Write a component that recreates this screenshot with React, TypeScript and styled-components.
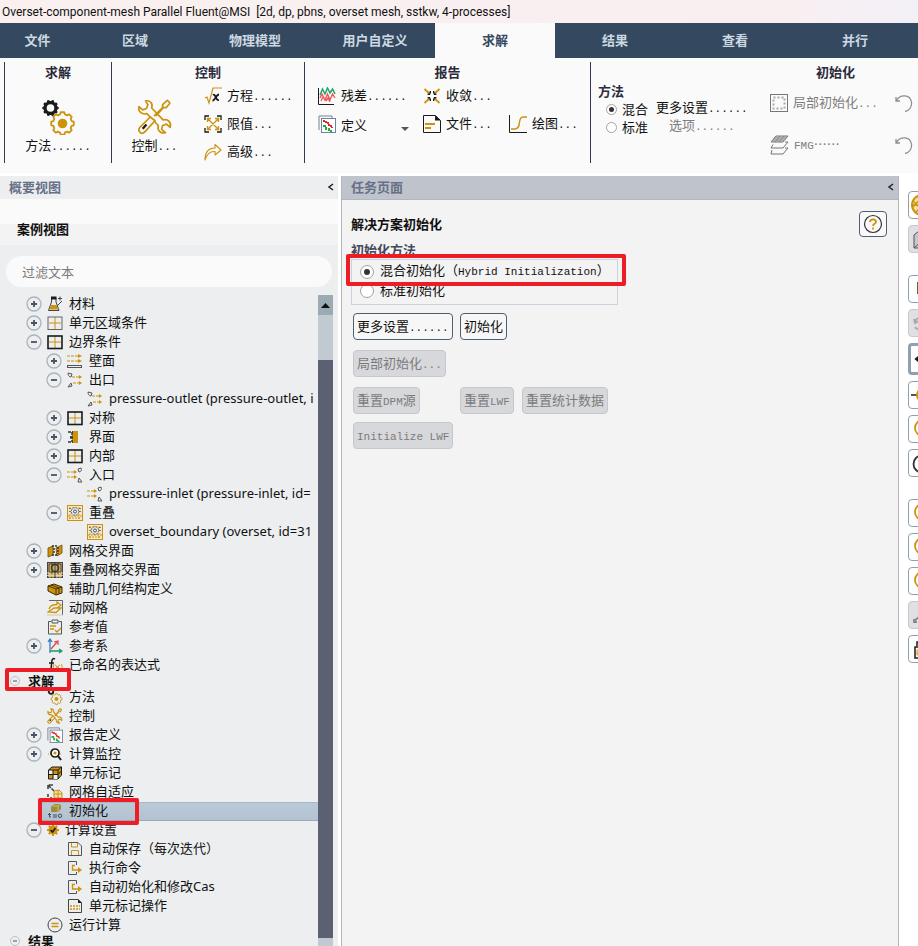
import React from "react";
import styled, { createGlobalStyle, css } from "styled-components";

const gold = "#cc930f";
const ink = "#1b1b1b";
const cjk = '"Noto Sans CJK SC", sans-serif';
const ui = '"Noto Sans", "Noto Sans CJK SC", sans-serif';

const GlobalStyle = createGlobalStyle`
  *, *::before, *::after { box-sizing: border-box; }
  body { margin: 0; background: #ffffff; }
  button, input { font: inherit; color: inherit; }
`;

const Shell = styled.div`
  display: flex;
  flex-direction: column;
  height: 100vh;
  overflow: hidden;
  color: #111;
  font: 13px/19px ${cjk};
`;

const TitleBar = styled.header`
  flex: none;
  height: 23px;
  padding: 0 2px;
  background: linear-gradient(90deg, #f9f0ef 0%, #f9eff1 85%, #f2f0f7 100%);
  font: 12px/24px Roboto, sans-serif;
  white-space: pre;
`;

const TabBar = styled.nav`
  display: flex;
  flex: none;
  height: 35px;
  overflow: hidden;
  background: #34495f;
`;

const Tab = styled.button<{ $active?: boolean; $first?: boolean }>`
  flex: none;
  width: ${(p) => (p.$first ? 75 : 120)}px;
  border: 0;
  padding: 0 0 1px;
  background: ${(p) => (p.$active ? "#fafafa" : "transparent")};
  color: ${(p) => (p.$active ? "#34495f" : "#ccd9e2")};
  font: bold 13px/34px ${cjk};
`;

const Ribbon = styled.section`
  display: flex;
  flex: none;
  height: 115px;
  padding: 4px 0 10px 4px;
  overflow: hidden;
  background: #fafafa;
`;

const Group = styled.div<{ $width: number }>`
  display: flex;
  flex: none;
  flex-direction: column;
  width: ${(p) => p.$width}px;
  border-left: 1px solid #2f3b4a;
`;

const GroupTitle = styled.h2`
  margin: 0;
  color: #2b2b3a;
  font: bold 13px/20px ${cjk};
  text-align: center;
`;

const GroupBody = styled.div<{ $pad?: number }>`
  display: flex;
  flex: 1;
  gap: 7px;
  padding-left: ${(p) => p.$pad ?? 0}px;
`;

const BigTool = styled.button<{ $width: number }>`
  display: flex;
  flex-direction: column;
  align-items: center;
  justify-content: flex-end;
  width: ${(p) => p.$width}px;
  height: 75px;
  border: 0;
  padding: 0;
  background: none;
  white-space: nowrap;
`;

const ToolGrid = styled.div<{ $columns: string }>`
  display: grid;
  grid-template-columns: ${(p) => p.$columns};
  grid-auto-rows: 28px;
  align-content: start;
`;

const Tool = styled.button`
  display: flex;
  align-items: center;
  gap: 5px;
  border: 0;
  padding: 0;
  background: none;
  white-space: nowrap;

  &:disabled { color: #7d7d7d; }
`;

const Caret = styled.span`
  margin: 9px 0 0 29px;
  border: 4px solid transparent;
  border-top-color: #555;
  border-bottom: 0;
`;

const Mono = styled.span`
  font: 11px/19px "Liberation Mono", monospace;
`;

const MethodColumn = styled.div`
  width: 172px;
  padding: 0 0 0 7px;
`;

const MethodTitle = styled.div`
  color: #2b2b3a;
  font: bold 13px/18px ${cjk};
`;

const MethodGrid = styled.div`
  display: grid;
  grid-template-columns: 58px auto;
  grid-auto-rows: 18px;
  align-items: center;
  justify-items: start;
`;

const RadioLabel = styled.label`
  display: flex;
  align-items: center;
  gap: 6px;
  white-space: nowrap;
`;

const RadioText = styled.span`
  padding-bottom: 2px;
`;

const Radio = styled.input<{ $size: number }>`
  display: grid;
  place-items: center;
  appearance: none;
  width: ${(p) => p.$size}px;
  height: ${(p) => p.$size}px;
  margin: 0;
  border: 1px solid #a3a3a3;
  border-radius: 50%;
  background: #fff;

  &:checked::after {
    content: "";
    width: ${(p) => (p.$size > 12 ? 6 : 5)}px;
    height: ${(p) => (p.$size > 12 ? 6 : 5)}px;
    border-radius: 50%;
    background: #333;
  }
`;

const MethodRadio = styled(RadioLabel)`
  padding-left: 8px;
  gap: 5px;
`;

const PlainButton = styled.button<{ $indent?: number }>`
  margin-left: ${(p) => p.$indent ?? 0}px;
  border: 0;
  padding: 0 0 2px;
  background: none;
  line-height: 18px;
  white-space: nowrap;

  &:disabled { color: #7d7d7d; }
`;

const InitGrid = styled.div`
  display: grid;
  grid-template-columns: 125px 20px;
  grid-auto-rows: 42px;
  align-items: center;
`;

const Workspace = styled.main`
  display: flex;
  flex: 1;
  min-height: 0;
  gap: 3px;
  padding-top: 3px;
`;

const Outline = styled.aside`
  display: flex;
  flex: none;
  flex-direction: column;
  width: 338px;
  background: #eceeef;
`;

const PanelHeader = styled.div<{ $strong?: boolean }>`
  display: flex;
  flex: none;
  align-items: center;
  justify-content: space-between;
  height: ${(p) => (p.$strong ? 24 : 23)}px;
  padding: 0 3px 2px 9px;
  background: ${(p) => (p.$strong ? "#bfc3cb" : "#eceeef")};
  ${(p) => p.$strong && "border-bottom: 1px solid #b2b6bd;"}
  color: #667087;
  font: bold 13px/20px ${cjk};
`;

const Collapse = styled.button`
  display: flex;
  border: 0;
  padding: 0;
  background: none;
`;

const CaseTitle = styled.h2`
  flex: none;
  height: 46px;
  margin: 0;
  padding: 20px 0 0 17px;
  background: linear-gradient(#fafafa 25px, #f3f3f3 25px);
  font: bold 13px/20px ${cjk};
`;

const Search = styled.input`
  flex: none;
  height: 31px;
  margin: 11px 6px 8px 6px;
  border: 0;
  border-radius: 16px;
  padding: 0 16px;
  background: #fafafa;
  font: 13px/20px ${cjk};

  &::placeholder { color: #7b7b7b; opacity: 1; }
`;

const TreeArea = styled.div`
  display: flex;
  flex: 1;
  min-height: 0;
  padding-right: 5px;
`;

const Tree = styled.ul`
  flex: 1;
  min-width: 0;
  margin: 0;
  padding: 0;
  overflow: hidden;
  list-style: none;
`;

const Row = styled.li<{ $level: number }>`
  position: relative;
  display: flex;
  align-items: center;
  height: 19px;
  padding-left: ${(p) => 6 + p.$level * 20}px;
  white-space: nowrap;
`;

const SectionRow = styled.li`
  position: relative;
  display: flex;
  align-items: center;
  gap: 8px;
  height: 13px;
  padding: 0 0 2px 10px;
  font: bold 13px/13px ${cjk};
`;

const Slot = styled.span`
  display: flex;
  flex: none;
  width: 16px;
  padding-bottom: 2px;
`;

const Toggle = styled.button`
  display: flex;
  border: 0;
  padding: 0;
  background: none;
`;

const RowContent = styled.span<{ $selected?: boolean }>`
  display: flex;
  flex: 1;
  align-items: center;
  gap: 6px;
  height: 19px;
  padding: 0 0 2px 5px;
  font: 13px/19px ${ui};
  ${(p) =>
    p.$selected &&
    css`
      padding-bottom: 1px;
      border-bottom: 1px solid #98a9b8;
      background: linear-gradient(#bccad7, #b3c2d1);
      box-shadow: inset 0 1px #a9b8c6;
    `}
`;

const Mark = styled.span<{ $x: number; $y: number; $w: number; $h: number }>`
  position: absolute;
  z-index: 2;
  left: ${(p) => p.$x}px;
  top: ${(p) => p.$y}px;
  width: ${(p) => p.$w}px;
  height: ${(p) => p.$h}px;
  border: 4px solid #ee1c25;
  border-radius: 2px;
  pointer-events: none;
`;

const ScrollTrack = styled.div`
  display: flex;
  flex: none;
  flex-direction: column;
  width: 15px;
  padding-bottom: 8px;
  background: #c2cad1;
`;

const ScrollUp = styled.button`
  display: flex;
  align-items: center;
  justify-content: center;
  height: 20px;
  margin-bottom: 45px;
  border: 0;
  padding: 0;
  background: #9babb4;
`;

const ScrollThumb = styled.div`
  flex: 1;
  background: #5b6172;
`;

const TaskPage = styled.section`
  flex: 1;
  min-width: 0;
  border: solid #b3b5b9;
  border-width: 0 1px;
  background: #f3f3f3;
`;

const TaskBody = styled.div`
  display: flex;
  align-items: flex-start;
  justify-content: space-between;
  padding: 11px 11px 0 9px;
`;

const TaskTitle = styled.h1`
  margin: 3px 0 7px;
  font: bold 13px/20px ${cjk};
`;

const Methods = styled.div`
  position: relative;
  width: 267px;
`;

const MethodsTitle = styled.div`
  height: 18px;
  color: #44485a;
  font: bold 13px/17px ${cjk};
`;

const MethodsBox = styled.div`
  display: grid;
  grid-auto-rows: 19px;
  height: 46px;
  padding: 2px 0 0 8px;
  border: 1px solid #cbd2e0;
`;

const ButtonGrid = styled.div<{ $top: number }>`
  display: grid;
  grid-template-columns: 99px 54px auto;
  gap: 10px 8px;
  justify-content: start;
  justify-items: start;
  margin: ${(p) => p.$top}px 0 0 2px;
`;

const Button = styled.button<{ $line?: boolean }>`
  height: 27px;
  border: 1px solid #4f5f72;
  border-radius: 4px;
  padding: 0 3px 2px;
  background: #f7f7f7;
  line-height: 23px;
  white-space: nowrap;
  ${(p) => p.$line && "grid-column: 1 / 4;"}

  &:disabled {
    border-color: #c5c7cb;
    background: #d7d8dc;
    color: #7b7b7b;
  }
`;

const HelpButton = styled.button`
  display: flex;
  align-items: center;
  justify-content: center;
  width: 28px;
  height: 26px;
  border: 1px solid #4f5f72;
  border-radius: 4px;
  padding: 0;
  background: #f9f9f9;
`;

const SideBar = styled.aside`
  display: flex;
  flex: none;
  flex-direction: column;
  gap: 6px;
  width: 16px;
  padding: 15px 0 0 6px;
  overflow: hidden;
`;

const SideButton = styled.button<{ $active?: boolean; $gap?: number }>`
  display: flex;
  flex: none;
  align-items: center;
  width: 28px;
  height: ${(p) => (p.$active ? 32 : 28)}px;
  margin-top: ${(p) => p.$gap ?? 0}px;
  border: ${(p) => (p.$active ? 3 : 1)}px solid #91a0ae;
  border-radius: 4px;
  padding: 0;
  background: #fff;

  &:disabled { border-color: #c8c9cd; background: #dfe0e4; }
`;

function gear(cx: number, cy: number, outer: number, inner: number, teeth: number) {
  const points: string[] = [];
  const step = (Math.PI * 2) / teeth;
  for (let i = 0; i < teeth; i++) {
    const a = i * step;
    const at = (r: number, t: number) =>
      `${(cx + r * Math.cos(a + t * step)).toFixed(2)} ${(cy + r * Math.sin(a + t * step)).toFixed(2)}`;
    points.push(at(inner, -0.34), at(outer, -0.2), at(outer, 0.2), at(inner, 0.34));
  }
  return `M${points.join("L")}Z`;
}

type SvgProps = { w?: number; h?: number; box?: string; children: React.ReactNode };
const Svg = ({ w = 16, h = w, box, children }: SvgProps) => (
  <svg width={w} height={h} viewBox={box ?? `0 0 ${w} ${h}`} fill="none" aria-hidden="true">
    {children}
  </svg>
);

const gearsArt = (
  <>
    <path d={gear(8.5, 11, 8.2, 7, 10)} fill={ink} />
    <circle cx="8.500" cy="11" r="3.800" fill="#fafafa" />
    <path d={gear(20.5, 26.5, 11.4, 9.4, 8)} stroke={gold} strokeWidth="1.800" strokeLinejoin="round" />
    <circle cx="20.500" cy="26.500" r="4.800" fill={gold} />
  </>
);

const toolsArt = (stroke: number) => (
  <>
    <path
      d="M9 2C14 1 17 5 15.500 9.500L27.500 22C33 20.500 36.500 25 35 30L31 26.500L27 28L26 32L30 35.500C25 37 21 33 22.500 28L10.500 15.500C5 17 1 13 2 8L6 11.500L10 10L11.500 6Z"
      stroke={gold}
      strokeWidth={stroke}
      strokeLinejoin="round"
    />
    <path d="M35 4L32 1.500L27 6V9L18 18M35 4L31 9H28L20 18" stroke={gold} strokeWidth={stroke} strokeLinejoin="round" />
    <path d="M14 19L19 23L8 35C5 38 0 34 3 30Z" fill="#fafafa" stroke={gold} strokeWidth={stroke} strokeLinejoin="round" />
    <path d="M10 27L6 31.500" stroke={ink} strokeWidth="2.400" />
  </>
);

const reportArt = (
  <>
    <path d="M1 15V1H14V3" stroke="#71839a" />
    <rect x="3.500" y="3.500" width="14" height="14" fill="#fff" stroke="#71839a" />
    <path d="M5 6H8V8H11V11H14V13" stroke="#e8232b" strokeWidth="2" strokeDasharray="2 1" />
    <path d="M5 11H8V14H11V16H14" stroke="#1fae3d" strokeWidth="2" strokeDasharray="3 1" />
  </>
);

const ribbonIcons = {
  gears: <Svg w={33} h={38}>{gearsArt}</Svg>,
  tools: <Svg w={36} h={36} box="0 0 38 38">{toolsArt(1.8)}</Svg>,
  equation: (
    <Svg w={18}>
      <path d="M1 11L3 10L5 16L9 1H18" stroke={gold} strokeWidth="1.200" />
      <path d="M9 8C12 6 11 14 15 13M15 7.500C12 7.500 11 14 8.500 13.500" stroke={ink} strokeWidth="1.800" />
    </Svg>
  ),
  limits: (
    <Svg w={18}>
      <path d="M1 5V1H5M13 1H17V5M17 13V17H13M5 17H1V13" stroke={ink} strokeWidth="1.300" />
      <path d="M4 4L14 14M14 4L4 14M3.500 7V3.500H7M11 3.500H14.500V7M14.500 11V14.500H11M7 14.500H3.500V11" stroke={gold} strokeWidth="1.300" />
    </Svg>
  ),
  advanced: (
    <Svg w={18}>
      <path d="M1 17C1 9 5 5 11 5V1.500L17 7L11 12V8.500C7 8 3 11 1 17Z" stroke={gold} strokeWidth="1.100" strokeLinejoin="round" />
    </Svg>
  ),
  residuals: (
    <Svg w={18}>
      <path d="M0.500 1V17.500H16" stroke={ink} />
      <path d="M2 8L4.500 2L7 7L9.500 1L12 6L14.500 2L17 7" stroke="#22a565" strokeWidth="1.500" />
      <path d="M2 11L4 7L7 13L9.500 7L12 13L14.500 7L17 11M3 14L5 10M8 14L10 11L12 15" stroke="#f0585c" strokeWidth="1.400" />
    </Svg>
  ),
  report: <Svg w={18}>{reportArt}</Svg>,
  converge: (
    <Svg w={18}>
      <path d="M1.500 2L7 7M16.500 2L11 7M1.500 16L7 11M16.500 16L11 11" stroke={gold} strokeWidth="1.800" />
      <path d="M7.300 4V7.300H4M10.700 4V7.300H14M7.300 14V10.700H4M10.700 14V10.700H14" stroke={ink} strokeWidth="1.400" strokeDasharray="2.500 1" />
    </Svg>
  ),
  file: (
    <Svg w={18}>
      <path d="M0.500 0.500H12.500L17.500 5.500V17.500H0.500Z" stroke={ink} />
      <path d="M12 0.500V5.500H17.500Z" fill={ink} />
      <path d="M2 9H12M2 13H8" stroke={gold} strokeWidth="2" />
    </Svg>
  ),
  plot: (
    <Svg w={18}>
      <path d="M0.500 0V17.500H18" stroke={ink} />
      <path d="M2 14H6C13 14 8 2 14 2H18" stroke={gold} strokeWidth="1.400" />
    </Svg>
  ),
  patch: (
    <Svg w={18}>
      <rect x="0.500" y="0.500" width="17" height="17" stroke="#777" />
      <rect x="3.500" y="3.500" width="11" height="11" stroke="#aaa" strokeWidth="2" strokeDasharray="2 2" />
    </Svg>
  ),
  layers: (
    <Svg w={19} h={20}>
      <path d="M6 1H18L13 7H1Z" fill="#ccc" stroke="#777" />
      <path d="M4 3H16M3 5H14M10 1L5 7M14 1L9 7" stroke="#777" strokeWidth="0.700" />
      <path d="M3 9.500L1 13H13L18 7H15M2 15L1 19H13L18 13H15" stroke="#777" />
    </Svg>
  ),
  undo: (
    <Svg w={18}>
      <path d="M1.500 6.500C5 0 15 0 16.500 8C17 13 14 16.500 10 17.500M1 3V7H5" stroke="#8f8f8f" strokeWidth="1.300" />
    </Svg>
  ),
};

const gridIcon = (stroke: string, width: number) => (
  <Svg>
    <path d="M8 2V14M2 8H14" stroke={gold} />
    <rect x="1" y="2" width="14" height="12.500" stroke={stroke} strokeWidth={width} />
  </Svg>
);
const outlet = (
  <Svg>
    <path d="M1 1L5 2L4 5C2 5 1 3 1 1ZM1 15L4 11L5 14Z" stroke="#555" />
    <path d="M5 5H14M6 11H14" stroke={gold} strokeDasharray="3 1" />
    <path d="M12 3L15 5L12 7ZM12 9L15 11L12 13Z" fill={gold} />
  </Svg>
);
const inlet = (
  <Svg>
    <path d="M14 1L11 2L12 5C14 5 15 3 14 1ZM11 15L12 11L15 15Z" stroke="#555" />
    <path d="M0 5H9M0 10H9" stroke={gold} strokeDasharray="3 1" />
    <path d="M7 3L10 5L7 7ZM7 8L10 10L7 12Z" fill={gold} />
  </Svg>
);
const overset = (
  <Svg>
    <rect x="0.500" y="0.500" width="15" height="15" fill="#f3e8cc" stroke={gold} />
    <path d="M2 3H14M2 13H14M3 9V15M12 9V15M1 11H15" stroke={gold} strokeDasharray="2 1" />
    <circle cx="8" cy="6.500" r="3.800" fill="#e5e7e9" stroke="#555" strokeDasharray="2 1" />
    <circle cx="8" cy="6.500" r="1.500" stroke="#555" />
    <path d="M3 3V8M13 3V8" stroke="#555" strokeDasharray="1 2" strokeWidth="1.500" />
  </Svg>
);
const command = (
  <Svg>
    <path d="M9.500 5V1.500H1.500V14.500H9.500V12" stroke="#555" />
    <path d="M8 5.500H5.500V10H12" stroke={gold} strokeWidth="1.300" />
    <path d="M11 7L15 10L11 13Z" fill={gold} />
  </Svg>
);

const treeIcons: Record<string, React.ReactNode> = {
  material: (
    <Svg>
      <path d="M4.500 2V6L1.500 14.500H12L9 6V2" stroke="#444" />
      <path d="M4 9L2.500 13.500H11L9.500 9Z" fill={gold} />
      <path d="M4 2H9.500" stroke={ink} strokeWidth="3" />
      <path d="M10 10L15 5M11 2.500H15M13 0.500V4.500" stroke="#444" />
    </Svg>
  ),
  cell: gridIcon("#666", 1),
  boundary: gridIcon(ink, 1.6),
  wall: (
    <Svg>
      <path d="M0 3H12M0 8H12" stroke={gold} strokeDasharray="3 1" />
      <path d="M11 1L15 3L11 5ZM11 6L15 8L11 10Z" fill={gold} />
      <rect x="0.500" y="12.500" width="14" height="2" stroke="#555" />
    </Svg>
  ),
  outlet,
  inlet,
  overset,
  interface: (
    <Svg>
      <path d="M5 2H11V14H5Z" fill={gold} />
      <path d="M1 3H6M1 13H6M5 3V13" stroke="#333" strokeWidth="1.500" strokeDasharray="3 1" />
      <path d="M3 7L6 8L3 10Z" fill="#333" />
    </Svg>
  ),
  meshInterface: (
    <Svg>
      <path d="M1 5L6 3V12L1 14ZM9 5L15 2V10L10 13Z" fill={gold} stroke="#6c4b00" strokeWidth="0.800" />
      <path d="M5 3H11M5 12H11M7 5V11M11 4V11" stroke="#333" strokeWidth="1.500" strokeDasharray="2 1" />
    </Svg>
  ),
  oversetInterface: (
    <Svg>
      <rect x="0.500" y="0.500" width="15" height="15" fill="#cba85a" stroke="#444" />
      <path d="M0 11H16M0 13.500H16M3 9V16M6 9V16M10 9V16M13 9V16" stroke="#e9dbb5" strokeWidth="0.800" />
      <path d="M2 2H14V10H2ZM5 0V12M8 0V16M11 0V12" stroke="#333" strokeWidth="0.800" />
      <circle cx="8" cy="6" r="3.500" stroke="#333" strokeWidth="1.300" />
    </Svg>
  ),
  geometry: (
    <Svg>
      <path d="M1 5L7 3L15 6V12L9 14L1 10Z" fill={gold} stroke="#3c2d06" />
      <path d="M1 5L9 8L15 6M9 8V14M4 4L12 7V13" stroke="#3c2d06" strokeWidth="0.900" />
    </Svg>
  ),
  dynamic: (
    <Svg>
      <path d="M2 0.500H15.500V15" stroke="#666" />
      <path d="M1 12L7 8H14L9 12.500ZM2 9C3 6 6 4.500 10 4.500V2L14 5L10 8" stroke={gold} strokeWidth="1.300" />
      <path d="M0 15H16" stroke="#d9c99c" />
    </Svg>
  ),
  values: (
    <Svg>
      <path d="M4 2.500H1.500V15H14.500V2.500H12" stroke="#555" />
      <path d="M5 1H11V4H5Z" stroke="#555" />
      <path d="M3 7H9M3 10H7M8 11L10 13L14 9" stroke={gold} strokeWidth="1.300" />
    </Svg>
  ),
  frame: (
    <Svg>
      <path d="M3 15V2M1 4L3 1L5 4" stroke="#2a82c9" strokeWidth="1.300" />
      <path d="M3 13H14M12 11L15 13L12 15" stroke="#199a62" strokeWidth="1.300" />
      <path d="M4 11L10 4M7 4L11 3V7" stroke="#e24444" strokeWidth="1.200" />
    </Svg>
  ),
  expression: (
    <Svg>
      <path d="M8 2C4 0 5 6 4 12C4 14 2 14 1 13M2 6H7" stroke={ink} strokeWidth="1.500" />
      <path d="M7 7C6 9 6 11 7 13M14 7C16 9 15 11 14 13M8 8L13 12M13 8L8 12" stroke={gold} />
    </Svg>
  ),
  methods: (
    <Svg>
      <circle cx="4" cy="2.500" r="2.300" stroke={ink} strokeWidth="1.800" />
      <path d={gear(9.5, 10, 5.5, 4.4, 8)} stroke={gold} strokeWidth="0.900" />
      <circle cx="9.500" cy="10" r="2" fill={gold} />
    </Svg>
  ),
  controls: <Svg box="0 0 38 38">{toolsArt(2.6)}</Svg>,
  reports: <Svg box="0 0 18 18">{reportArt}</Svg>,
  monitors: (
    <Svg>
      <path d="M1 8H15" stroke={gold} strokeDasharray="1 1" />
      <circle cx="8" cy="7" r="4" fill="#fff" stroke={ink} strokeWidth="1.700" />
      <circle cx="8" cy="7" r="1.600" fill={gold} />
      <path d="M11 10L14 14" stroke={ink} strokeWidth="2" />
    </Svg>
  ),
  register: (
    <Svg>
      <path d="M1.500 5L5 2H14.500V10L11 14H1.500Z" fill={gold} stroke={ink} />
      <path d="M2 5H6V9.500H2ZM6 9.500H11V14H6Z" fill="#eceeef" />
      <path d="M1.500 5H11V14M11 5L14.500 2M6 5V14M1.500 9.500H11L14.500 6" stroke={ink} />
    </Svg>
  ),
  adapt: (
    <Svg>
      <path d="M1 5V1H6M1 1L7 7M1 10V13M3 14H5" stroke="#444" strokeWidth="1.600" strokeDasharray="4 1" />
      <path d="M7 7L12 6L15 9V14H7ZM7 10H15M11 6V14" fill="#efdfb5" stroke={gold} />
    </Svg>
  ),
  initialize: (
    <Svg>
      <path d="M4 3L8 1H14V6L11 9H4Z" fill="#a08a3c" />
      <path d="M4 3H11V9M11 3L14 1" stroke="#c7b980" />
      <path d="M2.500 10V14H4M1 11.500H4M6 12H10M6 14H10" stroke="#3c4d5d" />
      <circle cx="13" cy="12.800" r="1.700" stroke="#3c4d5d" />
    </Svg>
  ),
  activities: (
    <Svg w={12}>
      <path d={gear(6, 6, 6, 4.4, 8)} fill={gold} />
      <path d="M3.500 6L5.500 8L8.500 4" stroke={ink} strokeWidth="1.600" />
    </Svg>
  ),
  save: (
    <Svg>
      <path d="M1.500 1.500H11L14.500 5V14.500H1.500Z" stroke="#555" />
      <path d="M4.500 2V6H10.500V2M4.500 14V9.500H11.500V14" stroke={gold} />
    </Svg>
  ),
  command,
  operation: (
    <Svg>
      <path d="M1.500 1.500H11L14.500 5V14.500H1.500Z" stroke="#444" />
      <path d="M11 1V5H15Z" fill={ink} />
      <path d="M3 8H13M3 11H13" stroke={gold} strokeWidth="1.600" strokeDasharray="2 1" />
    </Svg>
  ),
  run: (
    <Svg>
      <circle cx="8" cy="8" r="7" stroke="#444" />
      <path d="M4.500 6.500H11.500M4.500 9.500H11.500" stroke={gold} strokeWidth="1.400" />
    </Svg>
  ),
};

const ToggleIcon = ({ open, small }: { open: boolean; small?: boolean }) =>
  small ? (
    <Svg w={10}>
      <circle cx="5" cy="5" r="4.500" stroke="#bcc2c7" />
      <path d="M3 5H7" stroke="#555" />
    </Svg>
  ) : (
    <Svg>
      <circle cx="8" cy="8" r="7" stroke="#a9b4bb" strokeWidth="1.300" />
      <path d={open ? "M5 8H11" : "M5 8H11M8 5V11"} stroke="#4a5266" strokeWidth="1.800" />
    </Svg>
  );

const Chevron = () => (
  <Svg w={8} h={8}>
    <path d="M6 1L2 4L6 7" stroke="#222" strokeWidth="1.500" />
  </Svg>
);

type Item = { level: number; icon: string; label: string; open?: boolean; selected?: boolean };

const setupItems: Item[] = [
  { level: 1, icon: "material", label: "材料", open: false },
  { level: 1, icon: "cell", label: "单元区域条件", open: false },
  { level: 1, icon: "boundary", label: "边界条件", open: true },
  { level: 2, icon: "wall", label: "壁面", open: false },
  { level: 2, icon: "outlet", label: "出口", open: true },
  { level: 3, icon: "outlet", label: "pressure-outlet (pressure-outlet, i" },
  { level: 2, icon: "boundary", label: "对称", open: false },
  { level: 2, icon: "interface", label: "界面", open: false },
  { level: 2, icon: "boundary", label: "内部", open: false },
  { level: 2, icon: "inlet", label: "入口", open: true },
  { level: 3, icon: "inlet", label: "pressure-inlet (pressure-inlet, id=" },
  { level: 2, icon: "overset", label: "重叠", open: true },
  { level: 3, icon: "overset", label: "overset_boundary (overset, id=31" },
  { level: 1, icon: "meshInterface", label: "网格交界面", open: false },
  { level: 1, icon: "oversetInterface", label: "重叠网格交界面", open: false },
  { level: 1, icon: "geometry", label: "辅助几何结构定义" },
  { level: 1, icon: "dynamic", label: "动网格" },
  { level: 1, icon: "values", label: "参考值" },
  { level: 1, icon: "frame", label: "参考系", open: false },
  { level: 1, icon: "expression", label: "已命名的表达式" },
];

const solutionItems: Item[] = [
  { level: 1, icon: "methods", label: "方法" },
  { level: 1, icon: "controls", label: "控制" },
  { level: 1, icon: "reports", label: "报告定义", open: false },
  { level: 1, icon: "monitors", label: "计算监控", open: false },
  { level: 1, icon: "register", label: "单元标记" },
  { level: 1, icon: "adapt", label: "网格自适应" },
  { level: 1, icon: "initialize", label: "初始化", selected: true },
  { level: 1, icon: "activities", label: "计算设置", open: true },
  { level: 2, icon: "save", label: "自动保存（每次迭代）" },
  { level: 2, icon: "command", label: "执行命令" },
  { level: 2, icon: "command", label: "自动初始化和修改Cas" },
  { level: 2, icon: "operation", label: "单元标记操作" },
  { level: 1, icon: "run", label: "运行计算" },
];

const TreeRow = ({ item }: { item: Item }) => (
  <Row $level={item.level}>
    <Slot>
      {item.open !== undefined && (
        <Toggle aria-label={item.label} aria-expanded={item.open}>
          <ToggleIcon open={item.open} />
        </Toggle>
      )}
    </Slot>
    <RowContent $selected={item.selected}>
      {treeIcons[item.icon]}
      {item.label}
    </RowContent>
    {item.selected && <Mark $x={38} $y={-4} $w={101} $h={27} />}
  </Row>
);

const Section = ({ label, marked }: { label: string; marked?: boolean }) => (
  <SectionRow>
    <Toggle aria-label={label} aria-expanded>
      <ToggleIcon open small />
    </Toggle>
    {label}
    {marked && <Mark $x={5} $y={-7} $w={66} $h={23} />}
  </SectionRow>
);

const tabs = ["文件", "区域", "物理模型", "用户自定义", "求解", "结果", "查看", "并行"];

const ring = (
  <Svg w={26}>
    <circle cx="14" cy="12" r="8" stroke={gold} strokeWidth="1.800" />
  </Svg>
);

type Side = { name: string; art: React.ReactNode; disabled?: boolean; active?: boolean; gap?: number };
const sideTools: Side[] = [
  {
    name: "网格显示",
    art: (
      <Svg w={26}>
        <circle cx="13" cy="13" r="10" fill="#f2dfaa" stroke={gold} strokeWidth="2" />
        <path d="M4 9L12 17M4 15L13 5M7 20L15 12M3 13H20M8 4L16 12" stroke={gold} strokeWidth="1.500" />
      </Svg>
    ),
  },
  {
    name: "视图立方",
    disabled: true,
    art: (
      <Svg w={26}>
        <path d="M5 9L10 5H20V22H5ZM5 22L13 15" fill="#c6c7ca" stroke="#555" />
      </Svg>
    ),
  },
  { name: "面显示", gap: 16, art: <Svg w={26}><path d="M8 6H18V18H8Z" fill="#6b5b32" /></Svg> },
  {
    name: "旋转",
    disabled: true,
    art: (
      <Svg w={26}>
        <path d="M6 12C7 8 10 7 14 7M5 9L6 13L10 11M6 17C8 20 11 20 14 20" stroke="#aaa" strokeWidth="2" />
      </Svg>
    ),
  },
  { name: "平移", active: true, art: <Svg w={26}><path d="M4 13L9 9V12H20V14H9V17Z" fill={ink} /></Svg> },
  {
    name: "缩放",
    art: (
      <Svg w={26}>
        <path d="M2 13H8" stroke="#555" strokeWidth="2" />
        <circle cx="14" cy="13" r="6" stroke={gold} strokeWidth="2" />
      </Svg>
    ),
  },
  { name: "放大", art: ring },
  { name: "适合窗口", art: <Svg w={26}><circle cx="13" cy="14" r="8.500" stroke="#333" strokeWidth="1.800" /></Svg> },
  { name: "查询", gap: 16, art: ring },
  { name: "放大区域", art: ring },
  { name: "缩小区域", art: ring },
  { name: "测量", disabled: true, art: <Svg w={26}><path d="M5 19L16 10M5 17V20H8" stroke="#888" strokeWidth="1.800" /></Svg> },
  {
    name: "复制",
    art: (
      <Svg w={26}>
        <path d="M8 10V6H18" stroke={ink} strokeWidth="1.500" />
        <rect x="6" y="11" width="14" height="11" stroke={ink} strokeWidth="1.500" />
        <path d="M10 14H8V19H10M8 17H12" stroke={gold} />
      </Svg>
    ),
  },
];

const Dots = ({ n = 3 }: { n?: number }) => <Mono>{".".repeat(n)}</Mono>;

export default function App() {
  return (
    <Shell lang="zh-CN">
      <GlobalStyle />
      <TitleBar>{"Overset-component-mesh Parallel Fluent@MSI  [2d, dp, pbns, overset mesh, sstkw, 4-processes]"}</TitleBar>
      <TabBar>
        {tabs.map((t, i) => (
          <Tab key={t} $first={i === 0} $active={t === "求解"}>
            {t}
          </Tab>
        ))}
      </TabBar>

      <Ribbon>
        <Group $width={107}>
          <GroupTitle>求解</GroupTitle>
          <GroupBody>
            <BigTool $width={106}>
              {ribbonIcons.gears}
              <span>方法<Dots n={6} /></span>
            </BigTool>
          </GroupBody>
        </Group>

        <Group $width={193}>
          <GroupTitle>控制</GroupTitle>
          <GroupBody>
            <BigTool $width={85}>
              {ribbonIcons.tools}
              <span>控制<Dots /></span>
            </BigTool>
            <ToolGrid $columns="100px">
              <Tool>{ribbonIcons.equation}<span>方程<Dots n={6} /></span></Tool>
              <Tool>{ribbonIcons.limits}<span>限值<Dots /></span></Tool>
              <Tool>{ribbonIcons.advanced}<span>高级<Dots /></span></Tool>
            </ToolGrid>
          </GroupBody>
        </Group>

        <Group $width={286}>
          <GroupTitle>报告</GroupTitle>
          <GroupBody $pad={13}>
            <ToolGrid $columns="105px 86px 80px">
              <Tool>{ribbonIcons.residuals}<span>残差<Dots n={6} /></span></Tool>
              <Tool>{ribbonIcons.converge}<span>收敛<Dots /></span></Tool>
              <span />
              <Tool>{ribbonIcons.report}<span>定义</span><Caret /></Tool>
              <Tool>{ribbonIcons.file}<span>文件<Dots /></span></Tool>
              <Tool>{ribbonIcons.plot}<span>绘图<Dots /></span></Tool>
            </ToolGrid>
          </GroupBody>
        </Group>

        <Group $width={490}>
          <GroupTitle>初始化</GroupTitle>
          <GroupBody>
            <MethodColumn>
              <MethodTitle>方法</MethodTitle>
              <MethodGrid>
                <MethodRadio>
                  <Radio $size={11} type="radio" name="ribbon-method" defaultChecked />
                  <RadioText>混合</RadioText>
                </MethodRadio>
                <PlainButton>更多设置<Dots n={6} /></PlainButton>
                <MethodRadio>
                  <Radio $size={11} type="radio" name="ribbon-method" />
                  <RadioText>标准</RadioText>
                </MethodRadio>
                <PlainButton $indent={13} disabled>选项<Dots n={6} /></PlainButton>
              </MethodGrid>
            </MethodColumn>
            <InitGrid>
              <Tool disabled>{ribbonIcons.patch}<span>局部初始化<Dots /></span></Tool>
              <Tool disabled aria-label="重置局部初始化">{ribbonIcons.undo}</Tool>
              <Tool disabled>{ribbonIcons.layers}<span><Mono>FMG</Mono>……</span></Tool>
              <Tool disabled aria-label="重置FMG">{ribbonIcons.undo}</Tool>
            </InitGrid>
          </GroupBody>
        </Group>
      </Ribbon>

      <Workspace>
        <Outline>
          <PanelHeader>
            概要视图
            <Collapse aria-label="收起概要视图"><Chevron /></Collapse>
          </PanelHeader>
          <CaseTitle>案例视图</CaseTitle>
          <Search placeholder="过滤文本" aria-label="过滤文本" />
          <TreeArea>
            <Tree>
              {setupItems.map((item) => (
                <TreeRow key={item.label} item={item} />
              ))}
              <Section label="求解" marked />
              {solutionItems.map((item) => (
                <TreeRow key={item.label} item={item} />
              ))}
              <Section label="结果" />
            </Tree>
            <ScrollTrack>
              <ScrollUp aria-label="向上滚动">
                <Svg w={9} h={5}><path d="M0 5L4.500 0L9 5Z" fill="#111" /></Svg>
              </ScrollUp>
              <ScrollThumb />
            </ScrollTrack>
          </TreeArea>
        </Outline>

        <TaskPage>
          <PanelHeader $strong>
            任务页面
            <Collapse aria-label="收起任务页面"><Chevron /></Collapse>
          </PanelHeader>
          <TaskBody>
            <div>
              <TaskTitle>解决方案初始化</TaskTitle>
              <Methods>
                <MethodsTitle>初始化方法</MethodsTitle>
                <MethodsBox>
                  <RadioLabel>
                    <Radio $size={14} type="radio" name="method" defaultChecked />
                    <RadioText>混合初始化（<Mono>Hybrid Initialization</Mono>）</RadioText>
                  </RadioLabel>
                  <RadioLabel>
                    <Radio $size={14} type="radio" name="method" />
                    <RadioText>标准初始化</RadioText>
                  </RadioLabel>
                </MethodsBox>
                <Mark $x={-5} $y={13} $w={280} $h={32} />
              </Methods>
              <ButtonGrid $top={8}>
                <Button>更多设置<Dots n={6} /></Button>
                <Button>初始化</Button>
                <span />
                <Button $line disabled>局部初始化<Dots /></Button>
                <Button disabled>重置<Mono>DPM</Mono>源</Button>
                <Button disabled>重置<Mono>LWF</Mono></Button>
                <Button disabled>重置统计数据</Button>
              </ButtonGrid>
              <ButtonGrid $top={8}>
                <Button disabled><Mono>Initialize LWF</Mono></Button>
              </ButtonGrid>
            </div>
            <HelpButton aria-label="帮助">
              <Svg w={20}>
                <circle cx="10" cy="10" r="8.500" stroke="#333" strokeWidth="1.200" />
                <path d="M7 8C7 4.500 13 4.500 13 8C13 10 10 9.500 10 12M10 13.500V15.500" stroke={gold} strokeWidth="1.800" />
              </Svg>
            </HelpButton>
          </TaskBody>
        </TaskPage>

        <SideBar>
          {sideTools.map((s) => (
            <SideButton key={s.name} aria-label={s.name} disabled={s.disabled} $active={s.active} $gap={s.gap}>
              {s.art}
            </SideButton>
          ))}
        </SideBar>
      </Workspace>
    </Shell>
  );
}
